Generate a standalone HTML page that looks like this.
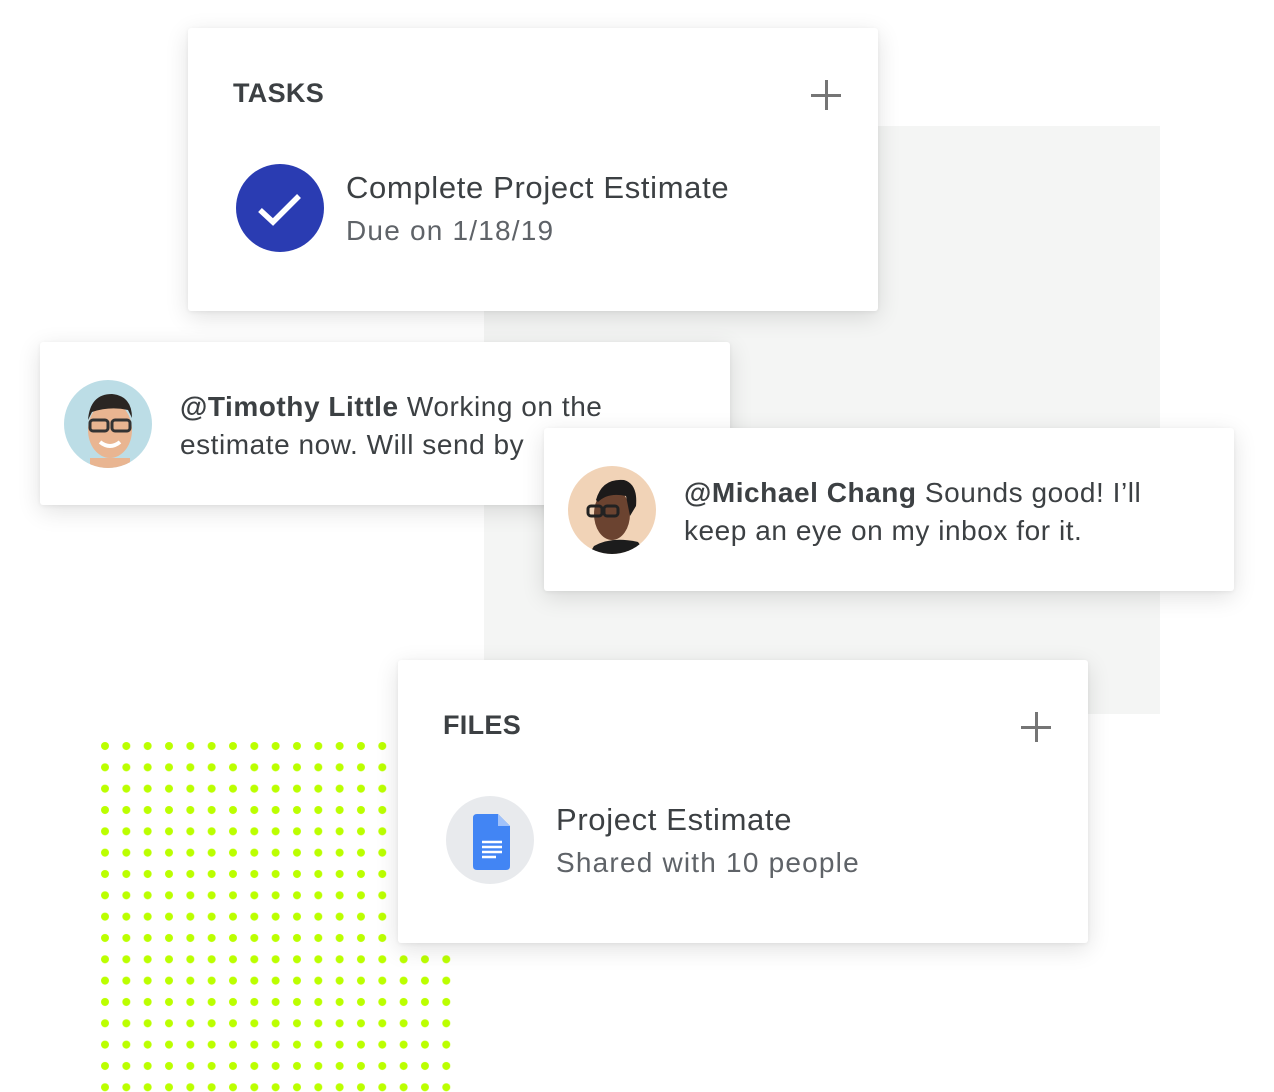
<!DOCTYPE html>
<html><head><meta charset="utf-8"><style>
*{margin:0;padding:0;box-sizing:border-box}
body{width:1274px;height:1092px;background:#fff;position:relative;overflow:hidden;font-family:"Liberation Sans",Roboto,sans-serif;color:#3c4043}
.card{position:absolute;background:#fff;box-shadow:0 6px 24px rgba(0,0,0,.12),0 1px 4px rgba(0,0,0,.06);border-radius:3px}
.t{position:absolute;white-space:nowrap}
.h{font-weight:bold;font-size:27px;color:#3c4043;letter-spacing:.3px}
.plus{position:absolute;width:30px;height:30px}
.plus:before,.plus:after{content:"";position:absolute;background:#757575}
.plus:before{left:14px;top:0;width:3px;height:30px}
.plus:after{top:14px;left:0;height:3px;width:30px}
.big{font-size:31px;color:#3c4043;letter-spacing:.65px}
.sub{font-size:28px;color:#5f6368;letter-spacing:1.2px}
.msg{font-size:28px;color:#3c4043;line-height:38px;letter-spacing:.55px}
</style></head><body>
<div style="position:absolute;left:484px;top:126px;width:676px;height:588px;background:#f4f5f4"></div>
<svg style="position:absolute;left:0;top:0" width="1274" height="1092"><defs><pattern id="p" x="101" y="742" width="21.33" height="21.33" patternUnits="userSpaceOnUse"><circle cx="4" cy="4" r="4" fill="#bbff00"/></pattern></defs><rect x="99" y="740" width="356" height="352" fill="url(#p)"/></svg>

<div class="card" style="left:188px;top:28px;width:690px;height:283px">
 <div class="t h" style="left:45px;top:50px">TASKS</div>
 <div class="plus" style="left:623px;top:52px"></div>
 <svg style="position:absolute;left:48px;top:136px" width="88" height="88"><circle cx="44" cy="44" r="44" fill="#2a3cb2"/><path d="M24 46 L37 58 L63 32" stroke="#fff" stroke-width="5.5" fill="none"/></svg>
 <div class="t big" style="left:158px;top:142px">Complete Project Estimate</div>
 <div class="t sub" style="left:158px;top:187px">Due on 1/18/19</div>
</div>

<div class="card" style="left:40px;top:342px;width:690px;height:163px">
 <svg style="position:absolute;left:24px;top:38px" width="88" height="88"><defs><clipPath id="c1"><circle cx="44" cy="44" r="44"/></clipPath></defs><g clip-path="url(#c1)"><rect width="88" height="88" fill="#bcdde6"/><ellipse cx="46" cy="50" rx="22" ry="28" fill="#e9b591"/><path d="M24 40 Q26 14 48 14 Q68 16 68 38 L64 30 Q46 26 28 32Z" fill="#2a2522"/><rect x="26" y="40" width="18" height="11" rx="3" fill="none" stroke="#333" stroke-width="3"/><rect x="48" y="40" width="18" height="11" rx="3" fill="none" stroke="#333" stroke-width="3"/><path d="M36 62 Q46 70 56 62" stroke="#fff" stroke-width="4" fill="none"/><rect x="26" y="78" width="40" height="12" fill="#e9b591"/></g></svg>
 <div class="t msg" style="left:140px;top:46px"><b>@Timothy Little</b> Working on the<br>estimate now. Will send by</div>
</div>

<div class="card" style="left:544px;top:428px;width:690px;height:163px">
 <svg style="position:absolute;left:24px;top:38px" width="88" height="88"><defs><clipPath id="c2"><circle cx="44" cy="44" r="44"/></clipPath></defs><g clip-path="url(#c2)"><rect width="88" height="88" fill="#f1d3b7"/><ellipse cx="44" cy="48" rx="18" ry="26" fill="#6b4330"/><path d="M28 34 Q34 12 56 14 Q70 18 68 40 L62 50 L58 30 Q40 26 30 36Z" fill="#1c1a1a"/><rect x="20" y="40" width="14" height="10" rx="3" fill="none" stroke="#222" stroke-width="3"/><rect x="36" y="40" width="14" height="10" rx="3" fill="none" stroke="#222" stroke-width="3"/><path d="M26 80 Q44 70 70 76 L80 90 L20 90Z" fill="#1c1c1c"/></g></svg>
 <div class="t msg" style="left:140px;top:46px"><b>@Michael Chang</b> Sounds good! I’ll<br>keep an eye on my inbox for it.</div>
</div>

<div class="card" style="left:398px;top:660px;width:690px;height:283px">
 <div class="t h" style="left:45px;top:50px">FILES</div>
 <div class="plus" style="left:623px;top:52px"></div>
 <svg style="position:absolute;left:48px;top:136px" width="88" height="88"><circle cx="44" cy="44" r="44" fill="#e8eaed"/><path d="M27 22 Q27 18 31 18 L52 18 L64 30 L64 70 Q64 74 60 74 L31 74 Q27 74 27 70Z" fill="#4285f4"/><path d="M52 18 L64 30 L52 30Z" fill="#a1c2fa"/><g stroke="#fff" stroke-width="2.5"><path d="M36 46H56M36 51H56M36 56H56M36 61H50"/></g></svg>
 <div class="t big" style="left:158px;top:142px">Project Estimate</div>
 <div class="t sub" style="left:158px;top:187px">Shared with 10 people</div>
</div>
</body></html>
